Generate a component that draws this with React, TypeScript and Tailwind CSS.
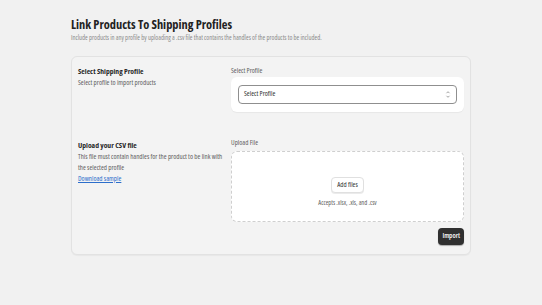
import React from "react";

const font = { fontFamily: '"Open Sans", "Liberation Sans", sans-serif', fontStretch: "75%" };

export default function App() {
  return (
    <div className="min-h-[305px] w-full bg-[#f1f1f1] px-[71px] pt-[18px] text-[#303030]" style={font}>
      <h1 className="text-[12.4px] font-bold leading-[14px] text-[#222]">Link Products To Shipping Profiles</h1>
      <p className="mt-[1px] text-[6.6px] leading-[9px] text-[#8a8a8a]">
        Include products in any profile by uploading a .csv file that contains the handles of the products to be included.
      </p>
      <div className="mt-[14px] rounded-[6px] border border-[#e2e2e2] bg-[#f3f3f3] px-[6px] pt-[9px] pb-[9px] shadow-[0_1px_1px_rgba(0,0,0,0.04)]">
        <div className="flex">
          <div className="w-[153px]">
            <div className="text-[7.6px] font-bold leading-[10px] text-[#262626]">Select Shipping Profile</div>
            <div className="mt-[2px] text-[7px] leading-[9px] text-[#616161]">Select profile to import products</div>
          </div>
          <div className="flex-1">
            <div className="text-[7px] leading-[10px] text-[#616161]">Select Profile</div>
            <div className="mt-[1px] rounded-[6px] bg-white px-[7px] py-[8px] shadow-[0_1px_1px_rgba(0,0,0,0.05)]">
              <div className="flex h-[19px] items-center justify-between rounded-[4px] border border-[#8f8f8f] bg-white px-[5px]">
                <span className="text-[7px] text-[#303030]">Select Profile</span>
                <svg width="6" height="9" viewBox="0 0 6 9" fill="none" stroke="#8a8a8a" strokeWidth="0.8">
                  <path d="M1.5 3.2 L3 1.7 L4.5 3.2" />
                  <path d="M1.5 5.8 L3 7.3 L4.5 5.8" />
                </svg>
              </div>
            </div>
          </div>
        </div>
        <div className="mt-[26px] flex">
          <div className="w-[153px] pt-[2px]">
            <div className="text-[7.6px] font-bold leading-[10px] text-[#262626]">Upload your CSV file</div>
            <div className="mt-[1px] max-w-[149px] text-[7px] leading-[11px] text-[#616161]">
              This file must contain handles for the product to be link with the selected profile
            </div>
            <a className="mt-[1px] block text-[7px] leading-[10px] text-[#2c6ecb] underline">Download sample</a>
          </div>
          <div className="flex-1">
            <div className="text-[7px] leading-[10px] text-[#616161]">Upload File</div>
            <div className="mt-[3px] flex h-[71px] flex-col items-center justify-center rounded-[6px] border border-dashed border-[#cfcfcf] bg-white">
              <div className="mt-[12px] flex h-[16px] items-center rounded-[4px] border border-[#e0e0e0] bg-white px-[5px] text-[7px] text-[#303030] shadow-[0_1px_0_rgba(0,0,0,0.08)]">
                Add files
              </div>
              <div className="mt-[5px] text-[6.5px] text-[#616161]">Accepts .xlsx, .xls, and .csv</div>
            </div>
            <div className="mt-[6px] flex justify-end">
              <div className="flex h-[17px] items-center rounded-[4px] bg-[#303030] px-[4px] text-[7px] font-semibold text-white shadow-[0_1px_1px_rgba(0,0,0,0.3)]">
                Import
              </div>
            </div>
          </div>
        </div>
      </div>
    </div>
  );
}
